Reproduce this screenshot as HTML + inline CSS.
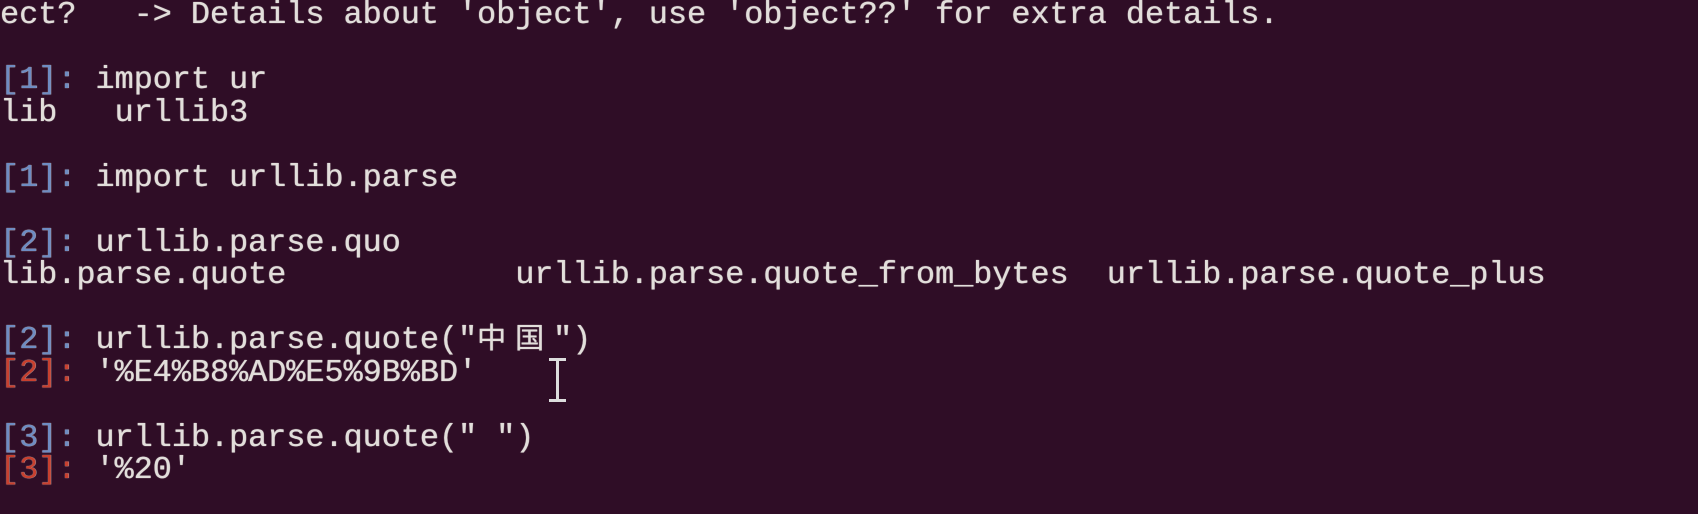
<!DOCTYPE html>
<html><head><meta charset="utf-8"><style>
html,body{margin:0;padding:0;width:1698px;height:514px;overflow:hidden;background:#2f0d26;}
.l{position:absolute;left:0;white-space:pre;font-family:"Liberation Mono","Noto Sans CJK SC",monospace;font-size:31.8px;line-height:32.5px;color:#e2dedb;text-shadow:0 0 1px rgba(230,225,220,.8),0.4px 0 0 rgba(230,225,220,.6);}
.b{color:#6e8cc2}.r{color:#c8402f}
.cj{display:inline-block;width:38px;font-size:29px;text-align:left}
</style></head><body>
<div class="l" style="top:-1px">ect?   -&gt; Details about 'object', use 'object??' for extra details.</div>
<div class="l" style="top:64px"><span class="b">[1]:</span> import ur</div>
<div class="l" style="top:96.5px">lib   urllib3</div>
<div class="l" style="top:161.5px"><span class="b">[1]:</span> import urllib.parse</div>
<div class="l" style="top:226.5px"><span class="b">[2]:</span> urllib.parse.quo</div>
<div class="l" style="top:259px">lib.parse.quote            urllib.parse.quote_from_bytes  urllib.parse.quote_plus</div>
<div class="l" style="top:324px"><span class="b">[2]:</span> urllib.parse.quote("<span class="cj">中</span><span class="cj">国</span>")</div>
<div class="l" style="top:356.5px"><span class="r">[2]:</span> '%E4%B8%AD%E5%9B%BD'</div>
<div class="l" style="top:421.5px"><span class="b">[3]:</span> urllib.parse.quote(" ")</div>
<div class="l" style="top:454px"><span class="r">[3]:</span> '%20'</div>
<div style="position:absolute;left:556px;top:359px;width:3px;height:42px;background:#ddd"></div>
<div style="position:absolute;left:549px;top:358px;width:17px;height:3px;background:#ddd"></div>
<div style="position:absolute;left:549px;top:399px;width:17px;height:3px;background:#ddd"></div>
</body></html>
